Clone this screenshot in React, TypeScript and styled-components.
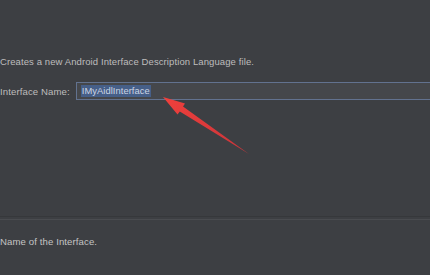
import * as React from "react";
import styled, {createGlobalStyle} from "styled-components";

const GlobalStyle = createGlobalStyle`
    html, body {
        margin: 0;
        padding: 0;
        background: #3d3f43;
    }
    body {
        font-family: "Liberation Sans", Arial, sans-serif;
        color: #bbbbbb;
    }
`;

const Page = styled.div`
    position: relative;
    width: 430px;
    height: 275px;
    overflow: hidden;
    display: flex;
    flex-direction: column;
    background: #3d3f43;
`;

const Body = styled.div`
    flex: 1;
    display: flex;
    flex-direction: column;
    padding-top: 56px;
`;

const Description = styled.div`
    font-size: 9.5px;
    line-height: 12px;
    color: #bdbdbd;
    letter-spacing: 0.1px;
`;

const FormRow = styled.div`
    display: flex;
    align-items: center;
    gap: 6px;
    margin-top: 14px;
`;

const Label = styled.label`
    font-size: 9.6px;
    color: #bdbdbd;
    white-space: nowrap;
    letter-spacing: 0.1px;
`;

const NameInput = styled.div`
    flex: 1;
    height: 16px;
    margin-right: -4px;
    border: 1px solid #62728f;
    background: #45474b;
    display: flex;
    align-items: center;
    padding-left: 4px;
`;

const Selected = styled.span`
    background: #465f88;
    color: #ccd5e4;
    font-size: 9.4px;
    line-height: 12px;
    padding: 0 1px;
    letter-spacing: 0.05px;
`;

const Divider = styled.div`
    height: 2px;
    border-top: 1px solid #36383b;
    border-bottom: 1px solid #4a4c50;
`;

const Footer = styled.div`
    height: 55px;
    padding-top: 16px;
    box-sizing: border-box;
    font-size: 9.6px;
    color: #c4c4c4;
    letter-spacing: 0.1px;
`;

const Overlay = styled.svg`
    position: absolute;
    left: 0;
    top: 0;
    pointer-events: none;
`;

const Arrow = () => (
    <Overlay width={430} height={275} viewBox="0 0 430 275">
        <defs>
            <linearGradient id="arrowFill" x1="163" y1="97" x2="249" y2="154" gradientUnits="userSpaceOnUse">
                <stop offset="0" stopColor="#f0403c"/>
                <stop offset="1" stopColor="#c8343a"/>
            </linearGradient>
        </defs>
        <polygon
            points="163,97 185,103.5 183,106.6 249,154 179.8,111.6 177.5,114.5"
            fill="url(#arrowFill)"
        />
    </Overlay>
);

export default function App() {
    return (
        <Page>
            <GlobalStyle/>
            <Body>
                <Description>Creates a new Android Interface Description Language file.</Description>
                <FormRow>
                    <Label>Interface Name:</Label>
                    <NameInput>
                        <Selected>IMyAidlInterface</Selected>
                    </NameInput>
                </FormRow>
            </Body>
            <Divider/>
            <Footer>Name of the Interface.</Footer>
            <Arrow/>
        </Page>
    );
}
